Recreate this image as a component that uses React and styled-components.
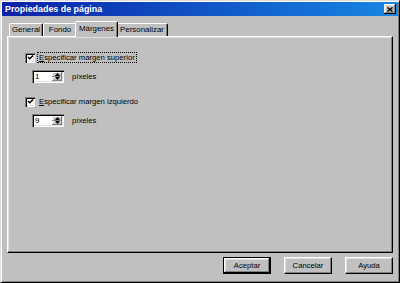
import React from 'react';
import styled, { createGlobalStyle } from 'styled-components';

const Global = createGlobalStyle`
  html, body { margin: 0; padding: 0; background: #c0c0c0; }
  body { font-family: "Liberation Sans", Arial, sans-serif; }
`;

const Dialog = styled.div`
  width: 400px;
  height: 283px;
  box-sizing: border-box;
  background: #c0c0c0;
  border: 1px solid;
  border-color: #dfdfdf #000 #000 #dfdfdf;
  box-shadow: inset 1px 1px #fff, inset -1px -1px #808080;
  padding: 1px;
  display: flex;
  flex-direction: column;
`;

const TitleBar = styled.div`
  height: 14px;
  flex: none;
  display: flex;
  align-items: center;
  justify-content: space-between;
  padding: 0 2px 0 3px;
  background: linear-gradient(to right, #0a22a6, #1786e4);
`;

const Title = styled.span`
  color: #fff;
  font-weight: bold;
  font-size: 8.9px;
  line-height: 14px;
  white-space: nowrap;
`;

const CloseButton = styled.div`
  width: 12px;
  height: 10px;
  box-sizing: border-box;
  background: #c0c0c0;
  display: flex;
  align-items: center;
  justify-content: center;
  box-shadow: inset -1px -1px #000, inset 1px 1px #fff, inset -2px -2px #808080, inset 2px 2px #dfdfdf;
`;

const Body = styled.div`
  flex: 1;
  display: flex;
  flex-direction: column;
  padding: 5px 5px 0 5px;
`;

const TabRow = styled.div`
  display: flex;
  align-items: flex-end;
  height: 15px;
  padding-left: 2px;
  position: relative;
  z-index: 2;
`;

const Tab = styled.div`
  box-sizing: border-box;
  width: ${p => p.$w}px;
  height: ${p => (p.$active ? '16px' : '13px')};
  margin: ${p => (p.$active ? '0 -2px -1px -2px' : '0')};
  background: #c0c0c0;
  border-top: 1px solid #fff;
  border-left: 1px solid #fff;
  border-right: 1px solid #000;
  border-radius: 2px 2px 0 0;
  box-shadow: inset -1px 0 #808080;
  font-size: 7.9px;
  text-align: center;
  line-height: ${p => (p.$active ? '13px' : '11px')};
  color: #000;
  white-space: nowrap;
  position: relative;
  z-index: ${p => (p.$active ? 3 : 1)};
`;

const Panel = styled.div`
  width: 386px;
  height: 217px;
  box-sizing: border-box;
  flex: none;
  border: 1px solid;
  border-color: #fff #000 #000 #fff;
  box-shadow: inset -1px -1px #808080, inset 1px 1px #dfdfdf;
  padding: 15px 0 0 17px;
  display: flex;
  flex-direction: column;
  align-items: flex-start;
`;

const Group = styled.div`
  display: flex;
  flex-direction: column;
  align-items: flex-start;
  margin-top: ${p => p.$gap || 0}px;
`;

const CheckRow = styled.div`
  display: flex;
  align-items: center;
  height: 11px;
`;

const Box = styled.div`
  width: 10px;
  height: 10px;
  box-sizing: border-box;
  background: #fff;
  box-shadow: inset 1px 1px #808080, inset 2px 2px #000, inset -1px -1px #fff, inset -2px -2px #dfdfdf;
  display: flex;
  align-items: center;
  justify-content: center;
`;

const Label = styled.span`
  margin-left: 2px;
  padding: 0 1px;
  height: 11px;
  box-sizing: border-box;
  font-size: 7.7px;
  line-height: 10px;
  color: #000;
  white-space: nowrap;
  outline: ${p => (p.$focus ? '1px dotted #000' : 'none')};
  outline-offset: -1px;
  border: 1px solid transparent;
  display: flex;
  align-items: center;
`;

const SpinRow = styled.div`
  display: flex;
  align-items: center;
  margin: 7px 0 0 7px;
`;

const Spinner = styled.div`
  width: 32px;
  height: 13px;
  box-sizing: border-box;
  background: #fff;
  padding: 2px;
  box-shadow: inset 1px 1px #808080, inset 2px 2px #000, inset -1px -1px #fff, inset -2px -2px #dfdfdf;
  display: flex;
`;

const SpinValue = styled.span`
  flex: 1;
  font-size: 8px;
  line-height: 9px;
  padding-left: 1px;
  color: #000;
`;

const SpinButtons = styled.div`
  width: 10px;
  display: flex;
  flex-direction: column;
`;

const SpinHalf = styled.div`
  flex: 1;
  background: #c0c0c0;
  display: flex;
  align-items: center;
  justify-content: center;
  box-shadow: inset -1px -1px #808080, inset 1px 1px #fff;
`;

const Unit = styled.span`
  margin-left: 8px;
  font-size: 7.7px;
  color: #000;
`;

const ButtonRow = styled.div`
  display: flex;
  justify-content: flex-end;
  gap: 13px;
  margin-top: 4px;
`;

const Button = styled.div`
  width: 48px;
  height: 17px;
  box-sizing: border-box;
  background: #c0c0c0;
  border: 1px solid ${p => (p.$default ? '#000' : 'transparent')};
  box-shadow: ${p =>
    p.$default
      ? 'inset -1px -1px #000, inset 1px 1px #fff, inset -2px -2px #808080, inset 2px 2px #dfdfdf'
      : 'inset -1px -1px #808080, inset 1px 1px #dfdfdf'};
  ${p => (p.$default ? '' : 'border-color: #fff #000 #000 #fff;')}
  display: flex;
  align-items: center;
  justify-content: center;
  font-size: 7.7px;
  color: #000;
`;

const Check = () => (
  <svg width="7" height="7" viewBox="0 0 7 7">
    <path d="M1 3 L2.8 4.8 L6 1.5" stroke="#000" strokeWidth="1.5" fill="none" />
  </svg>
);

const Arrow = ({ up }) => (
  <svg width="5" height="3" viewBox="0 0 5 3">
    <path d={up ? 'M0 3 L2.5 0 L5 3 Z' : 'M0 0 L2.5 3 L5 0 Z'} fill="#000" />
  </svg>
);

const Option = ({ label, value, focus, gap }) => (
  <Group $gap={gap}>
    <CheckRow>
      <Box><Check /></Box>
      <Label $focus={focus}><u>E</u>{label.slice(1)}</Label>
    </CheckRow>
    <SpinRow>
      <Spinner>
        <SpinValue>{value}</SpinValue>
        <SpinButtons>
          <SpinHalf><Arrow up /></SpinHalf>
          <SpinHalf><Arrow /></SpinHalf>
        </SpinButtons>
      </Spinner>
      <Unit>píxeles</Unit>
    </SpinRow>
  </Group>
);

export default function App() {
  return (
    <>
      <Global />
      <Dialog>
        <TitleBar>
          <Title>Propiedades de página</Title>
          <CloseButton>
            <svg width="6" height="5" viewBox="0 0 6 5">
              <path d="M0.5 0.5 L5.5 4.5 M5.5 0.5 L0.5 4.5" stroke="#000" strokeWidth="1.4" />
            </svg>
          </CloseButton>
        </TitleBar>
        <Body>
          <TabRow>
            <Tab $w={34}>General</Tab>
            <Tab $w={34}>Fondo</Tab>
            <Tab $w={43} $active>Márgenes</Tab>
            <Tab $w={52}>Personalizar</Tab>
          </TabRow>
          <Panel>
            <Option label="Especificar margen superior" value="1" focus />
            <Option label="Especificar margen izquierdo" value="9" gap={13} />
          </Panel>
          <ButtonRow>
            <Button $default>Aceptar</Button>
            <Button>Cancelar</Button>
            <Button>Ayuda</Button>
          </ButtonRow>
        </Body>
      </Dialog>
    </>
  );
}
